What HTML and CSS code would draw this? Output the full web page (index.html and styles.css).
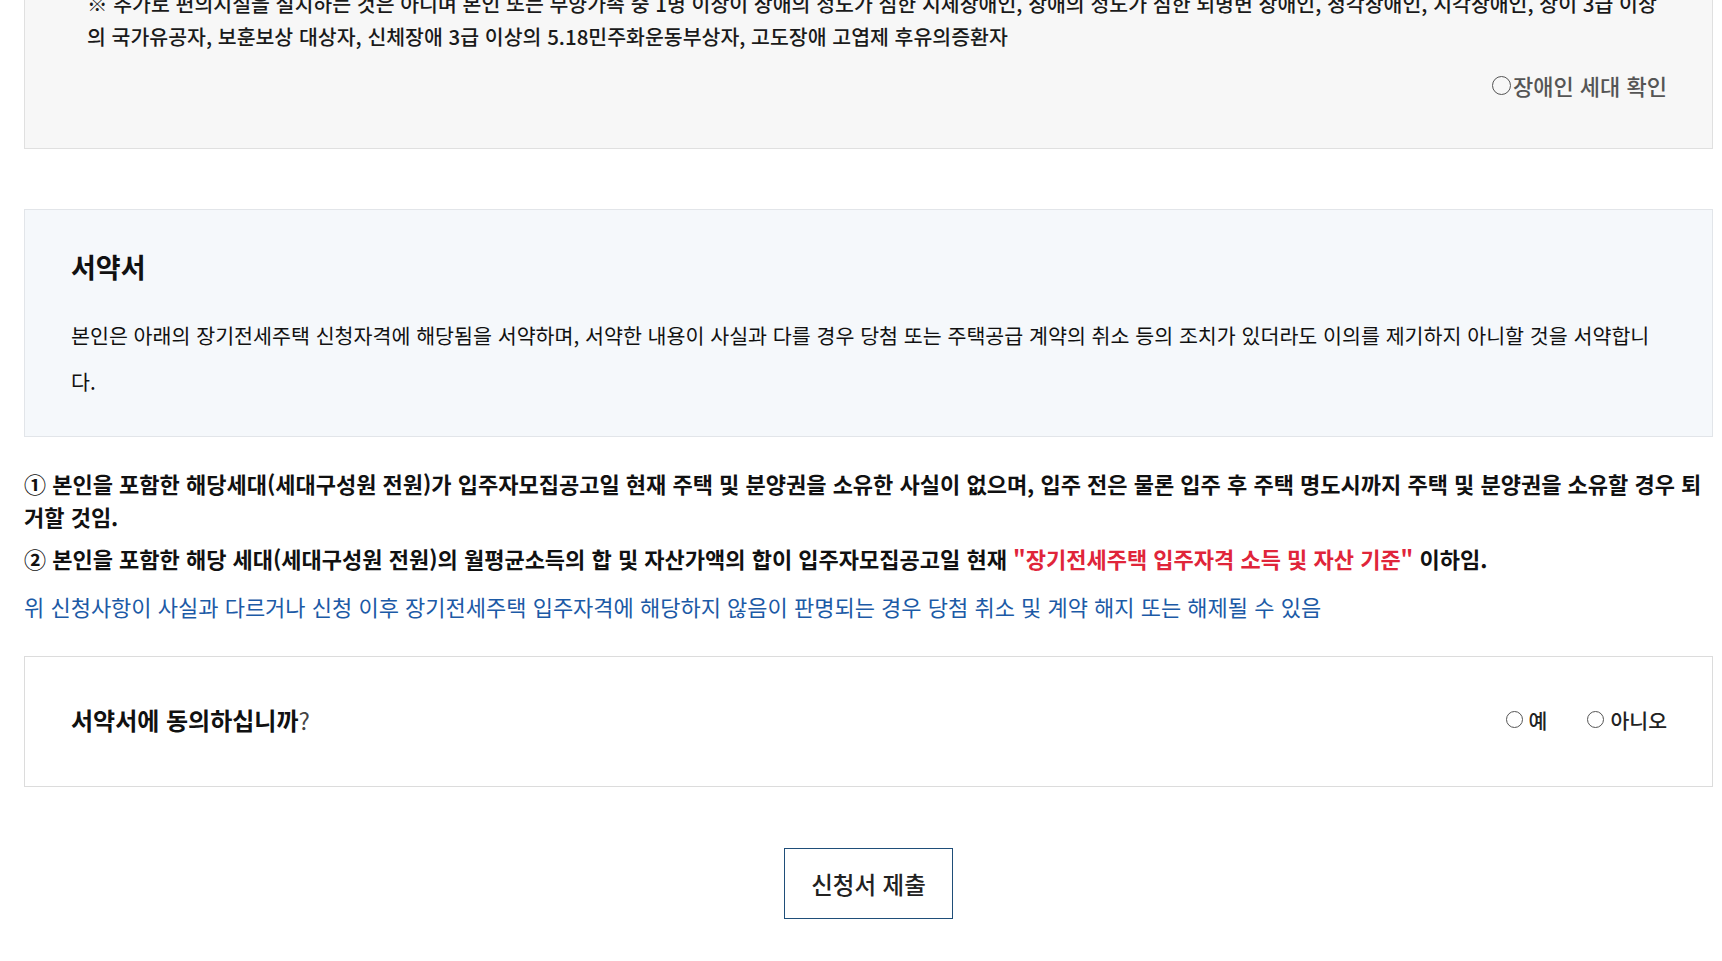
FILE: index.html
```html
<!DOCTYPE html>
<html lang="ko">
<head>
<meta charset="utf-8">
<title>장기전세주택 신청서</title>
<link rel="stylesheet" href="styles.css">
</head>
<body>
<div class="page">
  <section class="notice-box">
    <p class="notice-text">※ 추가로 편의시설을 설치하는 것은 아니며 본인 또는 부양가족 중 1명 이상이 장애의 정도가 심한 지체장애인, 장애의 정도가 심한 뇌병변 장애인, 청각장애인, 시각장애인, 상이 3급 이상<br>의 국가유공자, 보훈보상 대상자, 신체장애 3급 이상의 5.18민주화운동부상자, 고도장애 고엽제 후유의증환자</p>
    <div class="notice-check">
      <label class="check-label"><span class="circle circle-lg"></span>장애인 세대 확인</label>
    </div>
  </section>

  <section class="pledge-box">
    <h2 class="pledge-title">서약서</h2>
    <p class="pledge-text">본인은 아래의 장기전세주택 신청자격에 해당됨을 서약하며, 서약한 내용이 사실과 다를 경우 당첨 또는 주택공급 계약의 취소 등의 조치가 있더라도 이의를 제기하지 아니할 것을 서약합니다.</p>
  </section>

  <ol class="pledge-list">
    <li>① 본인을 포함한 해당세대(세대구성원 전원)가 입주자모집공고일 현재 주택 및 분양권을 소유한 사실이 없으며, 입주 전은 물론 입주 후 주택 명도시까지 주택 및 분양권을 소유할 경우 퇴거할 것임.</li>
    <li>② 본인을 포함한 해당 세대(세대구성원 전원)의 월평균소득의 합 및 자산가액의 합이 입주자모집공고일 현재 <span class="red">"장기전세주택 입주자격 소득 및 자산 기준"</span> 이하임.</li>
  </ol>
  <p class="warning">위 신청사항이 사실과 다르거나 신청 이후 장기전세주택 입주자격에 해당하지 않음이 판명되는 경우 당첨 취소 및 계약 해지 또는 해제될 수 있음</p>

  <section class="agree-box">
    <p class="agree-q">서약서에 동의하십니까<span class="qmark">?</span></p>
    <div class="agree-options">
      <label class="opt"><span class="circle"></span>예</label>
      <label class="opt"><span class="circle"></span>아니오</label>
    </div>
  </section>

  <div class="actions">
    <button type="button" class="submit-btn">신청서 제출</button>
  </div>
</div>
</body>
</html>
```

FILE: styles.css
```css
* { box-sizing: border-box; }
html, body { margin: 0; padding: 0; background: #fff; }
body {
  font-family: "Noto Sans CJK KR", "Noto Sans", sans-serif;
  color: #111;
  overflow: hidden;
}
.page {
  padding: 0 9px 0 24px;
}
.notice-box {
  margin-top: -44px;
  background: #f7f7f7;
  border: 1px solid #e0e0e0;
  padding: 30px 45px 48px 62px;
}
.notice-text {
  margin: 0;
  font-size: 20.5px;
  line-height: 33px;
  font-weight: 500;
  color: #1a1a1a;
  white-space: nowrap;
}
.notice-check {
  margin-top: 17px;
  height: 30px;
  display: flex;
  justify-content: flex-end;
  align-items: center;
}
.check-label {
  display: flex;
  align-items: center;
  font-size: 22px;
  color: #555;
  font-weight: 500;
}
.circle {
  display: inline-block;
  width: 17px;
  height: 17px;
  border: 1.3px solid #555;
  border-radius: 50%;
  background: #fff;
  margin-right: 6px;
}
.circle-lg {
  width: 19px;
  height: 19px;
  border: 1.5px solid #555;
  background: transparent;
  margin-right: 2px;
}
.pledge-box {
  margin-top: 60px;
  background: #f5f8fb;
  border: 1px solid #e2e5e9;
  padding: 40px 50px 32px 46px;
}
.pledge-title {
  margin: 0;
  font-size: 27px;
  line-height: 34px;
  font-weight: 700;
  color: #111;
}
.pledge-text {
  margin: 28px 0 0;
  font-size: 20.6px;
  line-height: 46px;
  color: #111;
}
.pledge-list {
  list-style: none;
  margin: 30px 0 0;
  padding: 0;
}
.pledge-list li {
  font-size: 22px;
  line-height: 33px;
  font-weight: 700;
  color: #111;
}
.pledge-list li + li { margin-top: 9px; }
.red { color: #e0253a; }
.warning {
  margin: 15px 0 0;
  font-size: 22px;
  line-height: 33px;
  color: #1c5aa6;
}
.agree-box {
  margin-top: 33px;
  height: 131px;
  border: 1px solid #dcdcdc;
  background: #fff;
  display: flex;
  align-items: center;
  justify-content: space-between;
  padding: 0 45px 4px 46px;
}
.agree-q {
  margin: 0;
  font-size: 24px;
  font-weight: 700;
  color: #111;
}
.qmark { font-weight: 400; color: #444; }
.agree-options {
  display: flex;
  gap: 40px;
  align-items: center;
}
.opt {
  display: flex;
  align-items: center;
  font-size: 20.5px;
  font-weight: 500;
  color: #222;
}
.actions {
  margin-top: 61px;
  display: flex;
  justify-content: center;
}
.submit-btn {
  width: 169px;
  height: 71px;
  border: 1px solid #1f4e79;
  background: #fff;
  font-family: inherit;
  font-size: 23.5px;
  font-weight: 500;
  color: #222;
}
```
